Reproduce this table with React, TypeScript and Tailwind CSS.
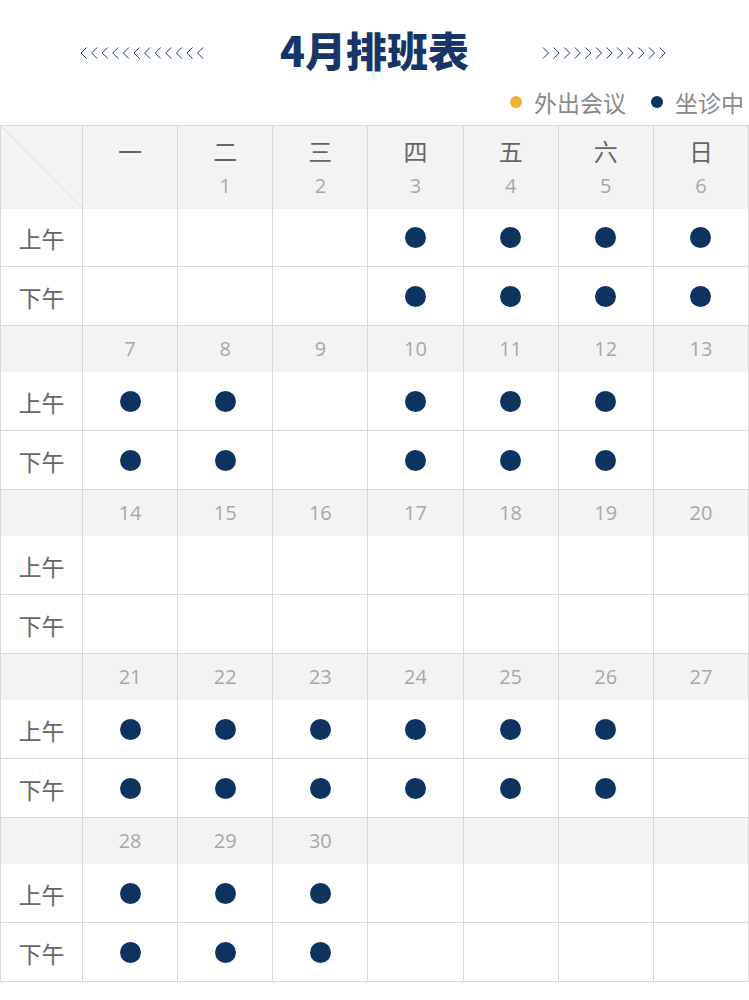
import React from "react";

const weekdays = ["一", "二", "三", "四", "五", "六", "日"];

type Week = { dates: (number | null)[]; on: boolean[] };

const weeks: Week[] = [
  { dates: [null, 1, 2, 3, 4, 5, 6], on: [false, false, false, true, true, true, true] },
  { dates: [7, 8, 9, 10, 11, 12, 13], on: [true, true, false, true, true, true, false] },
  { dates: [14, 15, 16, 17, 18, 19, 20], on: [false, false, false, false, false, false, false] },
  { dates: [21, 22, 23, 24, 25, 26, 27], on: [true, true, true, true, true, true, false] },
  { dates: [28, 29, 30, null, null, null, null], on: [true, true, true, false, false, false, false] },
];

const font = { fontFamily: '"Noto Sans CJK SC", "Open Sans", sans-serif' };
const digits = { fontFamily: '"Open Sans", sans-serif' };

const Chevrons = ({ dir }: { dir: "left" | "right" }) => (
  <svg className="mt-[8px]" width="127" height="12" viewBox="0 0 127 12">
    {Array.from({ length: 12 }).map((_, i) => {
      const x = i * 10.6 + 1;
      const d =
        dir === "left"
          ? `M${x + 5.5} 0.5 L${x} 6 L${x + 5.5} 11.5`
          : `M${x} 0.5 L${x + 5.5} 6 L${x} 11.5`;
      return <path key={i} d={d} fill="none" stroke="#1b3868" strokeWidth="1" />;
    })}
  </svg>
);

const Dot = () => <span className="block w-[21px] h-[21px] rounded-full bg-[#0f3361]" />;

// white cells carry right+bottom lines, gray bands only the right one
const cell = "border-r border-b border-[#d9d9d9] flex items-center justify-center";
const band = "border-r border-[#d9d9d9] bg-[#f3f3f3] flex items-center justify-center";

export default function App() {
  return (
    <div className="w-[749px] bg-white" style={font}>
      {/* Title */}
      <div className="h-[88px] pt-[10px] flex items-center justify-center">
        <Chevrons dir="left" />
        <h1 className="mx-[73px] text-[41px] leading-none font-black text-[#173566]">
          4月排班表
        </h1>
        <Chevrons dir="right" />
      </div>

      {/* Legend */}
      <div className="h-[37px] flex items-start justify-end pr-[5px] text-[23px] leading-[28px] text-[#8a8a8a]">
        <span className="flex items-center">
          <span className="w-[12px] h-[12px] rounded-full bg-[#f0b22e] mr-[12px]" />
          外出会议
        </span>
        <span className="flex items-center ml-[25px]">
          <span className="w-[12px] h-[12px] rounded-full bg-[#0f3361] mr-[12px]" />
          坐诊中
        </span>
      </div>

      {/* Calendar */}
      <div className="grid grid-cols-[82px_repeat(7,1fr)] border-l border-t border-[#d9d9d9]">
        <div className={`${band} relative h-[83px] overflow-hidden`}>
          <svg className="absolute inset-0" width="82" height="83" viewBox="0 0 82 83">
            <line x1="0" y1="0" x2="82" y2="83" stroke="#e0e0e0" strokeWidth="1" />
          </svg>
        </div>
        {weekdays.map((w, i) => (
          <div key={w} className={`${band} h-[83px] flex-col justify-start pt-[10px]`}>
            <span className="text-[24px] leading-[30px] text-[#666]">{w}</span>
            <span className="text-[20px] leading-[26px] mt-[7px] text-[#a8a8a8]" style={digits}>
              {weeks[0].dates[i] ?? ""}
            </span>
          </div>
        ))}

        {weeks.map((wk, wi) => (
          <React.Fragment key={wi}>
            {wi > 0 && (
              <>
                <div className={`${band} h-[46px]`} />
                {wk.dates.map((d, i) => (
                  <div key={i} className={`${band} h-[46px] text-[20px] text-[#a8a8a8]`} style={digits}>
                    {d ?? ""}
                  </div>
                ))}
              </>
            )}
            {["上午", "下午"].map((label, ri) => {
              const h = wi === 0 && ri === 0 ? "h-[58px]" : "h-[59px]";
              return (
                <React.Fragment key={label}>
                  <div className={`${cell} ${h} text-[23px] text-[#666] pt-[2px]`}>{label}</div>
                  {wk.on.map((on, i) => (
                    <div key={i} className={`${cell} ${h}`}>
                      {on && <Dot />}
                    </div>
                  ))}
                </React.Fragment>
              );
            })}
          </React.Fragment>
        ))}
      </div>
    </div>
  );
}
